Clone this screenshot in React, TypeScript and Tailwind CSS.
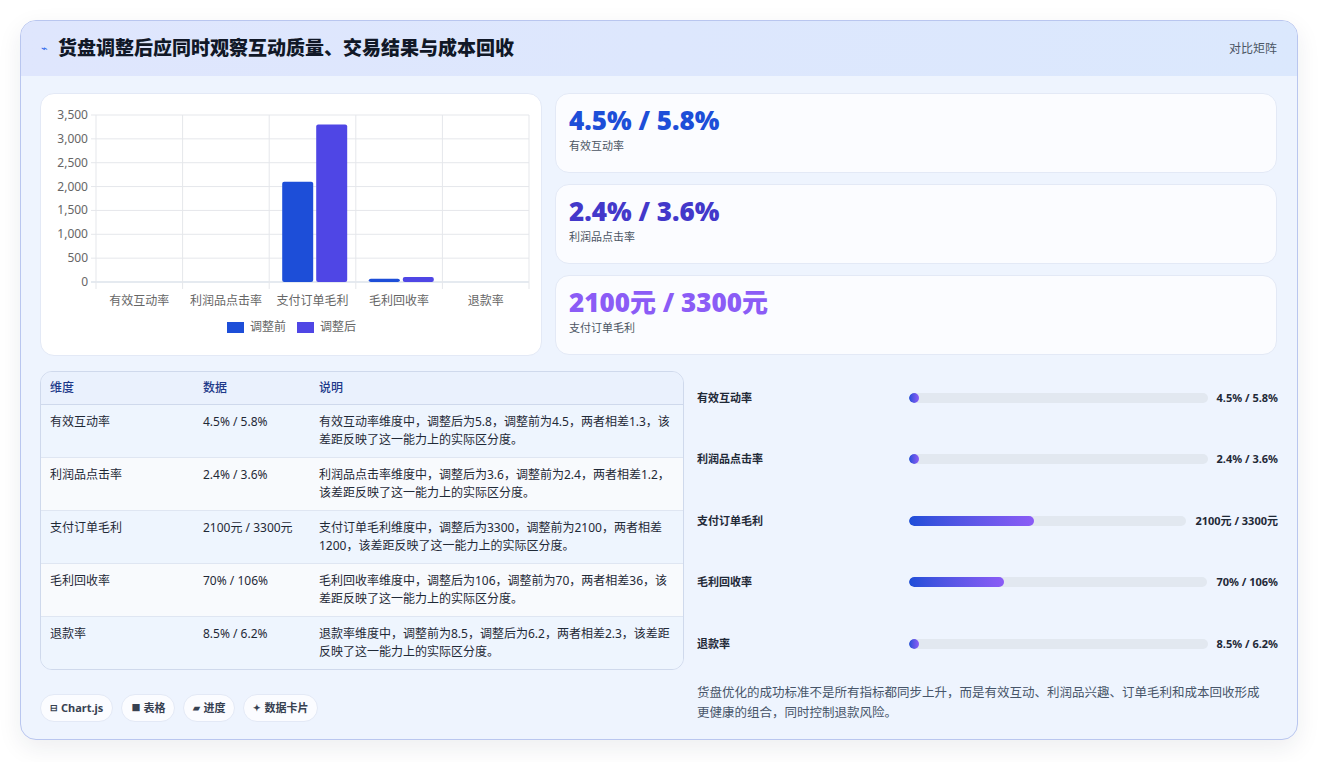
import React from "react";

const F = { fontFamily: '"Noto Sans", "Noto Sans CJK SC", sans-serif' };

const rows = [
  ["有效互动率", "4.5% / 5.8%", "有效互动率维度中，调整后为5.8，调整前为4.5，两者相差1.3，该差距反映了这一能力上的实际区分度。"],
  ["利润品点击率", "2.4% / 3.6%", "利润品点击率维度中，调整后为3.6，调整前为2.4，两者相差1.2，该差距反映了这一能力上的实际区分度。"],
  ["支付订单毛利", "2100元 / 3300元", "支付订单毛利维度中，调整后为3300，调整前为2100，两者相差1200，该差距反映了这一能力上的实际区分度。"],
  ["毛利回收率", "70% / 106%", "毛利回收率维度中，调整后为106，调整前为70，两者相差36，该差距反映了这一能力上的实际区分度。"],
  ["退款率", "8.5% / 6.2%", "退款率维度中，调整前为8.5，调整后为6.2，两者相差2.3，该差距反映了这一能力上的实际区分度。"],
];

const prog = [
  ["有效互动率", "4.5% / 5.8%", 0],
  ["利润品点击率", "2.4% / 3.6%", 0],
  ["支付订单毛利", "2100元 / 3300元", 45],
  ["毛利回收率", "70% / 106%", 32],
  ["退款率", "8.5% / 6.2%", 0],
] as const;

function Chart() {
  const x0 = 55, x1 = 488, yTop = 21, yBot = 188;
  const sc = (v: number) => yBot - (v / 3500) * (yBot - yTop);
  const cw = (x1 - x0) / 5;
  const cats = ["有效互动率", "利润品点击率", "支付订单毛利", "毛利回收率", "退款率"];
  const data = [[4.5, 5.8], [2.4, 3.6], [2100, 3300], [70, 106], [8.5, 6.2]];
  return (
    <svg width="500" height="262" style={{ fontFamily: '"Noto Sans", "Noto Sans CJK SC", sans-serif' }}>
      {[0, 500, 1000, 1500, 2000, 2500, 3000, 3500].map((v) => (
        <g key={v}>
          <line x1={x0 - 5} x2={x1} y1={sc(v)} y2={sc(v)} stroke={v === 0 ? "#cbd5e1" : "#e5e7eb"} />
          <text x={47} y={sc(v) + 4} textAnchor="end" fontSize="12" fill="#666">{v.toLocaleString("en-US")}</text>
        </g>
      ))}
      {[0, 1, 2, 3, 4, 5].map((i) => (
        <line key={i} x1={x0 + i * cw} x2={x0 + i * cw} y1={yTop} y2={yBot + 7} stroke="#e5e7eb" />
      ))}
      {data.map((d, i) => {
        const cx = x0 + i * cw;
        const h0 = yBot - sc(d[0]);
        const h1 = yBot - sc(d[1]);
        return (
          <g key={i}>
            {h0 > 1 && <rect x={cx + 13} y={sc(d[0])} width={31} height={h0} rx="2" fill="#1d4ed8" />}
            {h1 > 1 && <rect x={cx + 47} y={sc(d[1])} width={31} height={h1} rx="2" fill="#4f46e5" />}
            <text x={cx + cw / 2} y={211} textAnchor="middle" fontSize="12" fill="#666">{cats[i]}</text>
          </g>
        );
      })}
      <rect x={186} y={228} width={17} height={11} fill="#1d4ed8" />
      <text x={209} y={237} fontSize="12" fill="#666">调整前</text>
      <rect x={256} y={228} width={17} height={11} fill="#4f46e5" />
      <text x={279} y={237} fontSize="12" fill="#666">调整后</text>
    </svg>
  );
}

export default function App() {
  return (
    <div className="w-[1318px] h-[762px] bg-white p-[20px] pb-0" style={F}>
      <div className="w-[1278px] h-[720px] rounded-[16px] border border-[#b9c6ef] bg-[#eef4fe] shadow-[0_8px_24px_rgba(30,41,59,0.08)] overflow-hidden flex flex-col">
        <div className="h-[55px] shrink-0 flex items-center justify-between px-5 bg-gradient-to-r from-[#dfe6fd] to-[#dbe8fd]">
          <div className="flex items-center gap-[10px]">
            <span className="text-[#2563eb] text-[11px]">⌁</span>
            <span className="text-[19px] font-black text-[#111827]">货盘调整后应同时观察互动质量、交易结果与成本回收</span>
          </div>
          <span className="text-[12px] text-[#4b5563]">对比矩阵</span>
        </div>
        <div className="flex-1 px-[19px] pt-[17px] flex flex-col">
          <div className="flex gap-[13px]">
            <div className="w-[502px] h-[263px] bg-white rounded-[14px] border border-[#e3e9f6]">
              <Chart />
            </div>
            <div className="flex-1 flex flex-col gap-[11px] mr-[1px]">
              {[
                ["4.5% / 5.8%", "有效互动率", "text-[#1d4ed8]"],
                ["2.4% / 3.6%", "利润品点击率", "text-[#4338ca]"],
                ["2100元 / 3300元", "支付订单毛利", "text-[#8b5cf6]"],
              ].map(([v, l, c]) => (
                <div key={l} className="h-[80px] bg-[#fbfcff] rounded-[14px] border border-[#e3e9f6] px-[13px] pt-[10px]">
                  <div className={`text-[26px] font-black leading-[32px] ${c}`}>{v}</div>
                  <div className="text-[11px] text-[#4b5563] mt-[2px]">{l}</div>
                </div>
              ))}
            </div>
          </div>
          <div className="flex gap-[13px] mt-[15px]">
            <div className="w-[644px] flex flex-col">
              <div className="rounded-[12px] border border-[#cfd9ec] overflow-hidden text-[12px] text-[#1f2937]">
                <div className="flex h-[33px] items-center bg-[#eaf1fd] border-b border-[#cfd9ec] text-[#1e3a8a] font-medium">
                  <div className="w-[162px] pl-[9px]">维度</div>
                  <div className="w-[116px]">数据</div>
                  <div className="flex-1">说明</div>
                </div>
                {rows.map((r, i) => (
                  <div key={i} className={`flex py-[8px] ${i % 2 ? "bg-[#f8fafd]" : "bg-[#eef5fe]"} ${i < 4 ? "border-b border-[#dfe6f2]" : ""}`}>
                    <div className="w-[162px] pl-[9px] leading-[18px]">{r[0]}</div>
                    <div className="w-[116px] leading-[18px]">{r[1]}</div>
                    <div className="flex-1 pr-[12px] leading-[18px]">{r[2]}</div>
                  </div>
                ))}
              </div>
              <div className="flex gap-[8px] mt-[24px]">
                {[["⊟", "Chart.js"], ["■", "表格"], ["▰", "进度"], ["✦", "数据卡片"]].map(([ic, t]) => (
                  <div key={t} className="h-[28px] px-[9px] flex items-center gap-[3px] rounded-full bg-[#fbfcff] border border-[#e3e9f6] text-[11px] font-bold text-[#374151]">
                    <span className="text-[9px]">{ic}</span>{t}
                  </div>
                ))}
              </div>
            </div>
            <div className="flex-1 flex flex-col -mt-[4px]">
              {prog.map(([l, v, p], i) => (
                <div key={i} className="h-[61.5px] flex items-center text-[11px] font-semibold text-[#1f2937]">
                  <div className="w-[212px] shrink-0">{l}</div>
                  <div className="flex-1 h-[10px] rounded-full bg-[#e2e8f0] mr-[9px] overflow-hidden">
                    <div className="h-full rounded-full bg-gradient-to-r from-[#1d4ed8] to-[#8b5cf6]" style={{ width: p ? `${p}%` : "10px" }} />
                  </div>
                  <div className="font-bold">{v}</div>
                </div>
              ))}
              <div className="text-[12.5px] leading-[20px] text-[#475569] mt-[8px] pr-[12px]">
                货盘优化的成功标准不是所有指标都同步上升，而是有效互动、利润品兴趣、订单毛利和成本回收形成更健康的组合，同时控制退款风险。
              </div>
            </div>
          </div>
        </div>
      </div>
    </div>
  );
}
